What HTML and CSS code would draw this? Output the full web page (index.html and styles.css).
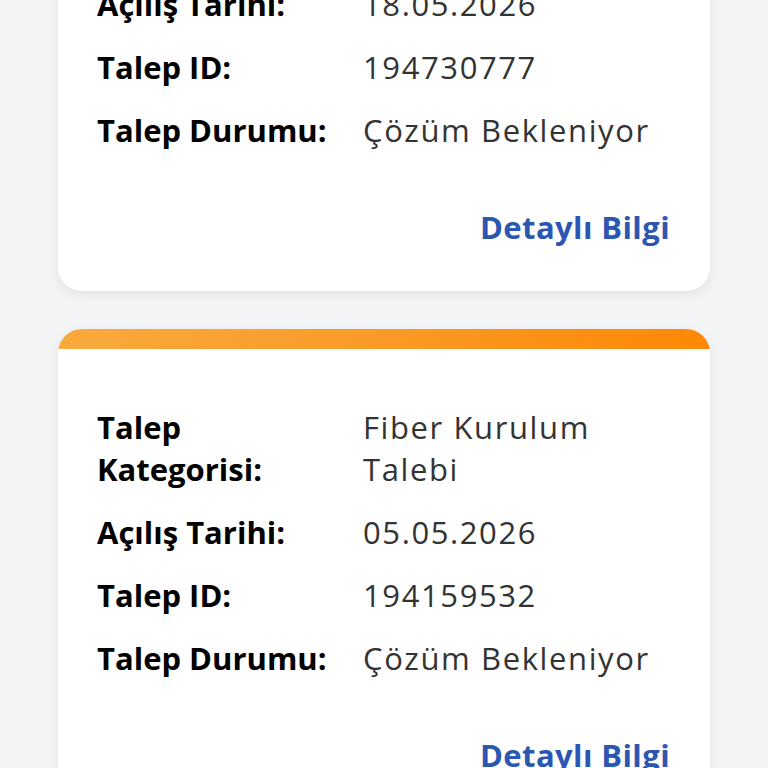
FILE: index.html
```html
<!DOCTYPE html>
<html lang="tr">
<head>
<meta charset="utf-8">
<link rel="stylesheet" href="styles.css">
</head>
<body>
<div class="list">
  <div class="card">
    <div class="bar"></div>
    <div class="body">
      <div class="rows">
        <div class="label">Talep Kategorisi:</div><div class="value">Arıza Talebi</div>
        <div class="label">Açılış Tarihi:</div><div class="value">18.05.2026</div>
        <div class="label">Talep ID:</div><div class="value">194730777</div>
        <div class="label">Talep Durumu:</div><div class="value">Çözüm Bekleniyor</div>
      </div>
      <div class="more"><a class="link">Detaylı Bilgi</a></div>
    </div>
  </div>
  <div class="card">
    <div class="bar"></div>
    <div class="body">
      <div class="rows">
        <div class="label">Talep Kategorisi:</div><div class="value">Fiber Kurulum Talebi</div>
        <div class="label">Açılış Tarihi:</div><div class="value">05.05.2026</div>
        <div class="label">Talep ID:</div><div class="value">194159532</div>
        <div class="label">Talep Durumu:</div><div class="value">Çözüm Bekleniyor</div>
      </div>
      <div class="more"><a class="link">Detaylı Bilgi</a></div>
    </div>
  </div>
</div>
</body>
</html>
```

FILE: styles.css
```css
html, body {
  margin: 0;
  padding: 0;
  background: #f3f4f6;
  height: 768px;
  overflow: hidden;
}
body {
  font-family: "Open Sans", "Noto Sans", sans-serif;
}
.list {
  margin-top: -199px;
  padding: 0 58px;
  display: flex;
  flex-direction: column;
  gap: 38px;
}
.card {
  background: #fff;
  border-radius: 24px;
  overflow: hidden;
  box-shadow: 0 4px 12px rgba(0, 0, 0, 0.07);
}
.bar {
  height: 20px;
  background: linear-gradient(90deg, #f8aa3c 0%, #fa9a26 50%, #fe8806 100%);
}
.body {
  padding: 57px 40px 43px 39px;
}
.rows {
  display: grid;
  grid-template-columns: 266px 1fr;
  row-gap: 21px;
  font-size: 31px;
  line-height: 42px;
}
.label {
  font-weight: 700;
  color: #000;
  padding-right: 30px;
}
.value {
  color: #333;
  font-weight: 400;
  letter-spacing: 1.6px;
}
.more {
  display: flex;
  justify-content: flex-end;
  margin-top: 55px;
}
.link {
  font-size: 31px;
  line-height: 42px;
  font-weight: 700;
  color: #2b56b2;
  letter-spacing: 0.4px;
}
```
